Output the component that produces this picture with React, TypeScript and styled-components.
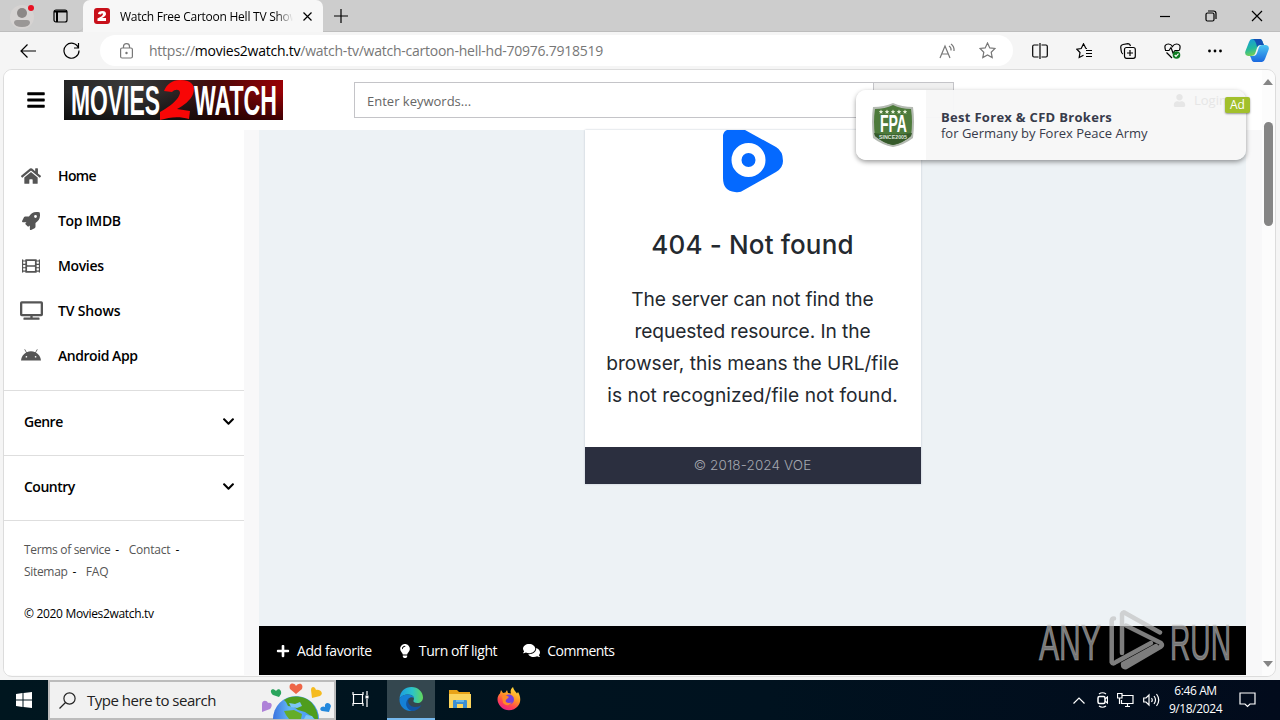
import type { ReactNode } from "react";
import styled, { createGlobalStyle } from "styled-components";
import {
  FaHome,
  FaRocket,
  FaFilm,
  FaTv,
  FaAndroid,
  FaChevronDown,
  FaPlus,
  FaLightbulb,
  FaComments,
  FaUser,
  FaBars,
} from "react-icons/fa";

const menus = [
  { name: "Home", icon: <FaHome size={20} />, gap: -0.6 },
  { name: "Top IMDB", icon: <FaRocket size={18} />, gap: -0.35 },
  { name: "Movies", icon: <FaFilm size={18} />, gap: -0.35 },
  { name: "TV Shows", icon: <FaTv size={23} />, gap: -0.15 },
  { name: "Android App", icon: <FaAndroid size={20} />, gap: -0.45 },
];

const sentences = [
  { text: "The server can not find the", gap: -0.12 },
  { text: "requested resource. In the", gap: -0.1 },
  { text: "browser, this means the URL/file", gap: -0.03 },
  { text: "is not recognized/file not found.", gap: 0.06 },
];

const BrandLogo = () => (
  <svg width="219" height="40" viewBox="0 0 219 40">
    <defs>
      <linearGradient id="brand" x1="0" x2="1" y1="0" y2="0">
        <stop offset="0" stopColor="#252525" />
        <stop offset="0.3" stopColor="#3a3a3a" />
        <stop offset="0.5" stopColor="#2b2424" />
        <stop offset="0.7" stopColor="#4a0808" />
        <stop offset="1" stopColor="#990005" />
      </linearGradient>
      <linearGradient id="brandShade" x1="0" x2="0" y1="0" y2="1">
        <stop offset="0.3" stopColor="#000" stopOpacity="0" />
        <stop offset="1" stopColor="#000" stopOpacity="0.6" />
      </linearGradient>
    </defs>
    <rect width="219" height="40" fill="url(#brand)" />
    <rect width="219" height="40" fill="url(#brandShade)" />
    <path
      d="M100 11 C103 4 108 0 116 0 C128 0 132 6 129 14 C127 20 119 26 113 29 L126 31 L125 39 C115 36 106 37 96 40 L96 32 C107 26 115 19 116 13 C116 9 111 9 108 12 Z"
      fill="#f80606"
    />
    <g transform="scale(1 1.6)" fill="#fff" fontFamily="Liberation Sans Narrow, Liberation Sans" fontWeight="700" fontSize="27">
      <text x="7" y="22" textLength="89" lengthAdjust="spacingAndGlyphs">MOVIES</text>
      <text x="130" y="22" textLength="83" lengthAdjust="spacingAndGlyphs">WATCH</text>
    </g>
  </svg>
);

const Globe = () => (
  <svg width="72" height="37" viewBox="0 0 72 37">
    <defs>
      <linearGradient id="sea" x1="0" x2="1" y1="0" y2="0">
        <stop offset="0" stopColor="#3b74e0" />
        <stop offset="0.35" stopColor="#62b4f5" />
        <stop offset="1" stopColor="#3f8ff0" />
      </linearGradient>
    </defs>
    <circle cx="36" cy="37" r="23" fill="url(#sea)" />
    <path d="M24 18 C32 12 45 14 51 20 C56 26 58 31 58 37 L55 37 L51 34 L45 30 L38 28 L34 25 L28 24 L26 20 Z" fill="#4f9d1d" />
    <path d="M24 29 L34 28 L42 32 L41 37 H29 L26 33 Z" fill="#64ad28" />
    <path d="M29 21 L35 22 L40 20 L42 24 L37 26 L31 25Z" fill="#7cc6f5" />
    <path d="M46 33 L52 34 L54 37 H44Z" fill="#7cc6f5" />
    <path d="M36 12 l-6 -5 c-2 -6 4 -7 6 -3 c3 -4 8 -2 6 3 z" fill="#ee6648" />
    <path d="M19 15 l-6 -2 c-5 -5 0 -8 3 -4 c3 -4 6 0 5 3 z" fill="#2aa45c" />
    <path d="M52 16 l-1 -8 c0 -4 4 -4 5 0 c5 -1 8 4 4 6 z" fill="#f5bb20" />
    <path d="M2 30 l0 -8 c0 -4 5 -4 6 -1 c4 -1 5 3 2 6 z" fill="#ae82d8" />
    <path d="M69 30 l-7 -1 c-4 -2 0 -6 3 -4 c-1 -5 5 -5 6 -1 z" fill="#2388dd" />
  </svg>
);

const EdgeIcon = () => (
  <svg width="24" height="24" viewBox="0 0 24 24">
    <defs>
      <linearGradient id="edgeTop" x1="0" x2="1">
        <stop offset="0" stopColor="#1b9de2" />
        <stop offset="0.55" stopColor="#2cc3c8" />
        <stop offset="1" stopColor="#62d85b" />
      </linearGradient>
    </defs>
    <path d="M0.5 12 C1 4 6 0 12.5 0 C19 0 24 5 24 10.5 C24 14 21.500 16 18.500 16 C15.500 16 14 15 14.500 13.500 C16 11 14 7.500 9.500 7.500 C5 7.500 1.500 9.500 0.500 12Z" fill="url(#edgeTop)" />
    <path d="M0.5 12 C1.500 9 5 7.500 9 7.500 C12 7.500 14.500 9 15 11 C12 9 8 11.500 8.500 15.500 C9 20 13 23 17 22.500 C8 27 0 20 0.500 12Z" fill="#1580d6" />
    <path d="M10.500 11 C7 15 11 20 16 20 C19 20 21 19 22.500 18 C20 22 17 24 13 24 C9 23 6 19 7.500 14.500 C8 13 9 11.500 10.500 11Z" fill="#1254a2" />
  </svg>
);

const FolderIcon = () => (
  <svg width="22" height="19" viewBox="0 0 22 19">
    <path d="M0 0H8L10 2H21V18H0Z" fill="#e8a317" />
    <path d="M0 4H22V18H0Z" fill="#fbd45c" />
    <path d="M4 18V11Q4 10 5 10H17Q18 10 18 11V18H14V14H8V18Z" fill="#3d8fd1" />
    <path d="M7 10H15V12H7Z" fill="#67b7e8" />
  </svg>
);

const FirefoxIcon = () => (
  <svg width="24" height="24" viewBox="0 0 24 24">
    <defs>
      <linearGradient id="fox" x1="0.8" y1="0" x2="0.3" y2="1">
        <stop offset="0" stopColor="#ffe23d" />
        <stop offset="0.45" stopColor="#ff9426" />
        <stop offset="0.75" stopColor="#ff4352" />
        <stop offset="1" stopColor="#e8218b" />
      </linearGradient>
    </defs>
    <path d="M4 3 L6 6 L8.500 5.500 L10 3 L11 6 L14 6.500 C13 4 14 1.500 16 0 C16.500 3 19 5 20 6.500 L21 5 C24 10 24 15 21 19 C17 24 9 25 4 20 C-1 15 0 9 3 6.500Z" fill="url(#fox)" />
    <circle cx="12" cy="12.500" r="5" fill="#7440dc" />
    <path d="M5 9 Q9 7 12 10 L10 12 Q8 13 9 15 Q12 17 15 15 Q11 21 6 16Z" fill="#ff8a27" />
  </svg>
);

const CopilotIcon = () => (
  <svg width="24" height="23" viewBox="0 0 24 23">
    <defs>
      <linearGradient id="copL" x1="0" x2="0.3" y1="0" y2="1">
        <stop offset="0" stopColor="#1798e0" />
        <stop offset="0.6" stopColor="#23b99d" />
        <stop offset="1" stopColor="#75cf55" />
      </linearGradient>
      <linearGradient id="copR" x1="0" x2="0" y1="0" y2="1">
        <stop offset="0" stopColor="#4bc5f2" />
        <stop offset="1" stopColor="#1a68df" />
      </linearGradient>
    </defs>
    <path d="M7 0H15Q17 0 18 4L19 6H15Q13 6 12 9L10 15Q9 17 6 17H3Q-1 16 0.500 12L4 3Q5 0 7 0Z" fill="url(#copL)" />
    <path d="M17 23H9Q7 23 6 19L5 17H8Q11 17 12 14L14 8Q15 6 17 6H21Q25 7 23.500 11L20 20Q19 23 17 23Z" fill="url(#copR)" />
    <path d="M8 0H15Q17 0 18 4L19 6H15Q13 6 12 8Q11 2 8 0Z" fill="#1450b4" />
  </svg>
);

const FpaBadge = () => (
  <svg width="46" height="46" viewBox="0 0 46 46">
    <path d="M3 5Q14 5 23 1Q32 5 43 5Q45 19 43 36Q34 43 23 45Q12 43 3 36Q1 19 3 5Z" fill="#b4bab2" />
    <path d="M5 7Q15 7 23 3Q31 7 41 7Q43 20 41 34Q33 41 23 43Q13 41 5 34Q3 20 5 7Z" fill="#4d7a3b" />
    <path d="M4 31Q22 34 42 31L41 34Q33 41 23 43Q13 41 5 34Z" fill="#365a2b" />
    {[11, 17, 23, 29, 35].map((x) => (
      <path key={x} d={`M${x} 7.500l0.700 1.500h1.500l-1.200 1.200l0.500 1.600l-1.500 -0.900l-1.500 0.900l0.500 -1.600l-1.200 -1.200h1.500z`} fill="#e8f0d8" />
    ))}
    <g transform="scale(1 1.25)">
      <text x="10" y="24" fill="#fff" fontSize="19" fontWeight="700" fontFamily="Liberation Sans" textLength="27" lengthAdjust="spacingAndGlyphs">FPA</text>
    </g>
    <text x="9" y="37" fill="#dfe6dc" fontSize="5.500" fontWeight="700" fontFamily="Liberation Sans" textLength="28" lengthAdjust="spacingAndGlyphs">SINCE2005</text>
  </svg>
);

const AnyRun = () => (
  <svg width="196" height="64" viewBox="0 0 196 64">
    <g fill="none" stroke="#c0c0c0" strokeWidth="4.500" strokeLinejoin="round" strokeLinecap="round" opacity="0.65">
      <path d="M77 9.500 Q74.700 9.500 74.700 12 V53 Q76 56 79 53 L114 34" />
      <path d="M85 44 V5 Q86 2 89 4.500 L123 23.500" />
      <path d="M89 16.500 L124 34 Q126 36 124 37.500 L89 58 Q86 59 86 55 L119 37" />
    </g>
    <g transform="scale(1 1.750)" fill="#c0c0c0" fillOpacity="0.65" fontFamily="Liberation Sans Narrow, Liberation Sans" fontSize="29">
      <text x="2" y="29" stroke="#c0c0c0" strokeOpacity="0.4" strokeWidth="0.7" textLength="62" lengthAdjust="spacingAndGlyphs">ANY</text>
      <text x="133" y="29" stroke="#c0c0c0" strokeOpacity="0.4" strokeWidth="0.7" textLength="61" lengthAdjust="spacingAndGlyphs">RUN</text>
    </g>
  </svg>
);

const Line = ({ w, h, children }: { w: number; h: number; children: ReactNode }) => (
  <svg width={w} height={h} viewBox={`0 0 ${w} ${h}`} fill="none" stroke="currentColor" strokeWidth="1.2">
    {children}
  </svg>
);

const App = () => {
  return (
    <Screen>
      <GlobalStyle />
      <TabStrip>
        <StripLeft>
          <svg width="26" height="26" viewBox="0 0 26 26">
            <circle cx="12" cy="14" r="12" fill="#d6d3d2" />
            <circle cx="12" cy="10" r="5" fill="#8b8786" />
            <path d="M4 20Q4 17 7 17H17Q20 17 20 20Q19 24 12 24Q5 24 4 20Z" fill="#9a9796" />
            <circle cx="21" cy="5" r="3" fill="#e81123" />
          </svg>
          <Line w={15} h={14}>
            <rect x="1" y="1" width="13" height="12" rx="2" />
            <path d="M1 2.500H14M4 3V13" strokeWidth="2" />
          </Line>
        </StripLeft>
        <Tab>
          <svg width="16" height="16" viewBox="0 0 16 16">
            <rect width="16" height="16" rx="3" fill="#c8101a" />
            <path d="M4 6Q4 3 8.500 3Q12 3 12 6Q12 8 8 10H12V13H3.500V10.500Q9 8 9 6Q8 4.500 7 6.500Z" fill="#fff" />
          </svg>
          <TabTitle>Watch Free Cartoon Hell TV Show</TabTitle>
          <Line w={9} h={9}>
            <path d="M0.500 0.500L8.500 8.500M8.500 0.500L0.500 8.500" />
          </Line>
        </Tab>
        <NewTab>
          <Line w={14} h={14}>
            <path d="M7 0V14M0 7H14" />
          </Line>
        </NewTab>
        <WindowButtons>
          <Line w={12} h={12}>
            <path d="M1 6.500H11" />
          </Line>
          <Line w={12} h={12}>
            <rect x="1" y="3" width="8" height="8" rx="1.500" />
            <path d="M3 1H8.500Q11 1 11 3.500V9" />
          </Line>
          <Line w={12} h={12}>
            <path d="M1 1L11 11M11 1L1 11" />
          </Line>
        </WindowButtons>
      </TabStrip>
      <AddressRow>
        <NavIcons>
          <Line w={16} h={14}>
            <path d="M16 7H1M7.500 0.500L1 7L7.500 13.500" />
          </Line>
          <Line w={17} h={17}>
            <path d="M15.500 6A7.500 7.500 0 1 0 16 8.500M15.500 1V6H11" />
          </Line>
        </NavIcons>
        <UrlBar>
          <Line w={13} h={16}>
            <rect x="0.600" y="5" width="11.800" height="10" rx="1.500" />
            <path d="M3.500 5V3.500Q3.500 0.700 6.500 0.700Q9.500 0.700 9.500 3.500V5" />
            <circle cx="6.500" cy="10" r="0.600" />
          </Line>
          <Url>
            https://<b>movies2watch.tv</b>/watch-tv/watch-cartoon-hell-hd-70976.7918519
          </Url>
          <Line w={17} h={16}>
            <path d="M1 15L6 3L11 15M3 11H9M10 3Q12.500 4.500 12 7.500M12 1Q15.500 3.500 15 8" />
          </Line>
          <Line w={17} h={17}>
            <path d="M8.500 1L10.800 5.900L16 6.500L12.200 10.200L13.200 15.600L8.500 13L3.800 15.600L4.800 10.200L1 6.500L6.200 5.900Z" />
          </Line>
        </UrlBar>
        <ToolIcons>
          <Line w={16} h={16}>
            <path d="M6.500 2H2Q0.700 2 0.700 3.500V12.500Q0.700 14 2 14H6.500M9.500 2H14Q15.300 2 15.300 3.500V12.500Q15.300 14 14 14H9.500M8 0V16" />
          </Line>
          <Line w={17} h={16}>
            <path d="M11 5.500L9.800 5.300L7.500 0.800L5.200 5.500L0.800 6.200L4 9.500L3.200 14.500L7.500 12.200M10 7.500H16M10 10.500H16M10 13.500H16" />
          </Line>
          <Line w={16} h={16}>
            <path d="M3 11Q1.500 10.500 1.200 8L0.700 4Q0.700 2 3 1.500L8 0.700Q10 0.700 10.500 3" />
            <rect x="4.500" y="4.500" width="10.800" height="10.800" rx="2" />
            <path d="M10 7V13M7 10H13" />
          </Line>
          <Line w={17} h={16}>
            <path d="M1.500 7Q-0.500 1 4.500 1Q7 1 8.500 3.500Q10 1 12.500 1Q17.500 1 15.500 7M1 7.500H5L7 4.500L9 10L11 7.500H15.500M2.500 9.500L8 15" />
            <circle cx="12.500" cy="12" r="3.800" fill="#0f7b22" stroke="none" />
            <path d="M10.700 12L12 13.300L14.500 10.700" stroke="#fff" />
          </Line>
          <Line w={14} h={4}>
            <g fill="currentColor" stroke="none">
              <circle cx="1.500" cy="2" r="1.400" />
              <circle cx="7" cy="2" r="1.400" />
              <circle cx="12.500" cy="2" r="1.400" />
            </g>
          </Line>
          <CopilotIcon />
        </ToolIcons>
      </AddressRow>

      <PageFrame>
        <Site>
          <Header>
            <FaBars size={20} />
            <BrandLogo />
            <SearchForm>
              <SearchText>Enter keywords...</SearchText>
              <SearchBtn />
            </SearchForm>
          </Header>
          <Body>
            <Sidebar>
              <MenuList>
                {menus.map((menu) => (
                  <MenuItem key={menu.name} $gap={menu.gap}>
                    <span>{menu.icon}</span>
                    {menu.name}
                  </MenuItem>
                ))}
              </MenuList>
              <Group>
                Genre
                <FaChevronDown size={13} />
              </Group>
              <Group>
                Country
                <FaChevronDown size={13} />
              </Group>
              <Links>
                <LinkRow>
                  <span>Terms of service</span>- <span>Contact</span>-
                </LinkRow>
                <LinkRow>
                  <span>Sitemap</span>- <span>FAQ</span>
                </LinkRow>
                <Copyright>© 2020 Movies2watch.tv</Copyright>
              </Links>
            </Sidebar>
            <Main>
              <Player>
                <NotFound>
                  <svg width="60" height="63" viewBox="0 0 60 63">
                    <path d="M0 5Q1 1 4 0H22L53 17Q60 21 60 31Q60 38 53 42L21 60Q17 63 12 62Q0 61 0 48Z" fill="#0469ff" />
                    <circle cx="25.500" cy="30" r="12" fill="none" stroke="#fff" strokeWidth="10" />
                  </svg>
                  <h1>404 - Not found</h1>
                  <Message>
                    {sentences.map((sentence) => (
                      <Sentence key={sentence.text} $gap={sentence.gap}>
                        {sentence.text}
                      </Sentence>
                    ))}
                  </Message>
                  <CardFooter>© 2018-2024 VOE</CardFooter>
                </NotFound>
              </Player>
              <ActionBar>
                <Action $gap={-0.4}><FaPlus size={14} /><span>Add favorite</span></Action>
                <Action $gap={-0.4}><FaLightbulb size={14} /><span>Turn off light</span></Action>
                <Action $gap={-0.5}><FaComments size={17} /><span>Comments</span></Action>
              </ActionBar>
            </Main>
          </Body>
        </Site>
        <Scrollbar>
          <svg width="10" height="6"><path d="M0 6L5 0L10 6Z" fill="#858585" /></svg>
          <Thumb />
          <svg width="10" height="6"><path d="M0 0L5 6L10 0Z" fill="#858585" /></svg>
        </Scrollbar>
        <AdCard>
          <AdLogo><FpaBadge /></AdLogo>
          <AdText>
            <strong>Best Forex &amp; CFD Brokers</strong>
            <span>for Germany by Forex Peace Army</span>
          </AdText>
          <Login><FaUser size={13} />Login</Login>
          <AdTag>Ad</AdTag>
        </AdCard>
      </PageFrame>

      <Taskbar>
        <Start>
          <svg width="16" height="16" viewBox="0 0 16 16">
            <path d="M0 2L6.500 1V7.500H0ZM7.500 0.900L16 0V7.500H7.500ZM0 8.500H6.500V15L0 14ZM7.500 8.500H16V16L7.500 15.100Z" fill="#fff" />
          </svg>
        </Start>
        <SearchBox>
          <Line w={17} h={17}>
            <circle cx="10.500" cy="6.500" r="5.600" />
            <path d="M6.500 10.500L0.500 16.500" />
          </Line>
          <span>Type here to search</span>
          <Globe />
        </SearchBox>
        <TaskButton>
          <Line w={17} h={16}>
            <path d="M1 1V3.500H11V1M1 15V12.500H11V15M1.500 4V12M10.500 4V12M15 0V4M15 8V16" />
            <path d="M13.500 6H16.500" strokeWidth="3" />
          </Line>
        </TaskButton>
        <TaskButton $active><EdgeIcon /></TaskButton>
        <TaskButton><FolderIcon /></TaskButton>
        <TaskButton><FirefoxIcon /></TaskButton>
        <Tray>
          <Line w={12} h={7}><path d="M0.500 6.500L6 1L11.500 6.500" /></Line>
          <Line w={12} h={16}>
            <rect x="2" y="4.500" width="7" height="7" rx="1.500" strokeWidth="1.5" />
            <path d="M9 7L11.500 5V11L9 9M3 2Q6.500 -0.500 10 2M3 14Q6.500 16.500 10 14" />
          </Line>
          <Line w={17} h={14}>
            <path d="M5 2.500H16V10.500H4.500V7M8 13.500H13M10.500 10.500V13.500M0.500 0.500H5V5H0.500ZM2.500 5V11" />
          </Line>
          <Line w={17} h={14}>
            <path d="M0.700 5H3L6 2V12L3 9H0.700ZM8.500 5Q10 7 8.500 9M11 3Q14 7 11 11M13.500 1Q18 7 13.500 13" />
          </Line>
          <Clock><span>6:46 AM</span><span>9/18/2024</span></Clock>
          <Line w={17} h={16}><path d="M1 1H16V12H11L8.500 14.500L6 12H1Z" /></Line>
        </Tray>
      </Taskbar>
      <Watermark><AnyRun /></Watermark>
    </Screen>
  );
};

export default App;

const GlobalStyle = createGlobalStyle`
  * { box-sizing: border-box; }
  body {
    margin: 0;
    overflow: hidden;
    font-family: "Open Sans", "Noto Sans", sans-serif;
  }
  svg { display: block; flex-shrink: 0; }
`;

const Screen = styled.div`
  position: relative;
  width: 1280px;
  height: 720px;
  display: flex;
  flex-direction: column;
  background: #f5f5f5;
  color: #000;
  white-space: nowrap;
`;

const TabStrip = styled.div`
  display: flex;
  height: 32px;
  background: #cdcdcd;
`;

const StripLeft = styled.div`
  display: flex;
  align-items: center;
  width: 83px;
  padding-left: 10px;
  gap: 17px;
  border-radius: 0 0 5px 0;
  border-bottom: 1px solid #bdbdbd;
`;

const Tab = styled.div`
  display: flex;
  align-items: center;
  width: 240px;
  padding: 0 11px;
  background: #f7f7f7;
  border-radius: 7px 7px 0 0;
`;

const TabTitle = styled.div`
  width: 173px;
  margin: 0 10px;
  overflow: hidden;
  font-size: 12px;
  letter-spacing: -0.25px;
  mask-image: linear-gradient(90deg, #000 90%, transparent);
`;

const NewTab = styled.div`
  flex: 1;
  display: flex;
  align-items: center;
  padding-left: 11px;
  border-bottom: 1px solid #bdbdbd;
`;

const WindowButtons = styled.div`
  display: flex;
  align-items: center;
  gap: 34px;
  padding-right: 17px;
  border-bottom: 1px solid #bdbdbd;
`;

const AddressRow = styled.div`
  display: flex;
  align-items: center;
  height: 37px;
`;

const NavIcons = styled.div`
  display: flex;
  align-items: center;
  gap: 27px;
  width: 100px;
  padding-left: 20px;
`;

const UrlBar = styled.div`
  display: flex;
  flex-shrink: 0;
  align-items: center;
  width: 913px;
  height: 31px;
  padding: 0 17px 0 20px;
  gap: 23px;
  border-radius: 16px;
  background: #fff;
  color: #777;
`;

const Url = styled.div`
  flex: 1;
  margin-left: -7px;
  font-size: 14px;
  letter-spacing: -0.24px;
  b {
    color: #000;
    font-weight: 400;
  }
`;

const ToolIcons = styled.div`
  flex: 1;
  display: flex;
  align-items: center;
  gap: 27.5px;
  padding: 0 10px 0 19px;
  svg:last-child {
    margin-left: -5px;
  }
`;

const PageFrame = styled.div`
  position: relative;
  display: flex;
  width: 1273px;
  height: 608px;
  margin-left: 3px;
  border: 1px solid #dcdcdc;
  border-radius: 9px;
  background: #fafafa;
  overflow: hidden;
`;

const Site = styled.div`
  width: 1258px;
  height: 606px;
`;

const Header = styled.div`
  display: flex;
  align-items: center;
  height: 60px;
  padding-left: 22px;
  background: #fff;
  svg + svg {
    margin-left: 18px;
  }
`;

const SearchForm = styled.div`
  display: flex;
  width: 600px;
  height: 36px;
  margin-left: 71px;
  border: 1px solid #c4c4c8;
`;

const SearchText = styled.div`
  flex: 1;
  padding-left: 12px;
  line-height: 36px;
  font-size: 13px;
  color: #666;
`;

const SearchBtn = styled.div`
  width: 80px;
  border-left: 1px solid #c4c4c8;
  background: #efefef;
`;

const Body = styled.div`
  display: flex;
  height: 545px;
  background: #f8f8f9;
`;

const Sidebar = styled.div`
  width: 240px;
  background: #fff;
`;

const MenuList = styled.div`
  height: 260px;
  padding-top: 23px;
`;

const MenuItem = styled.div<{ $gap: number }>`
  display: flex;
  align-items: center;
  height: 45px;
  font-size: 14px;
  font-weight: 600;
  letter-spacing: ${({ $gap }) => $gap}px;
  span {
    display: flex;
    justify-content: center;
    width: 54px;
    color: #555;
  }
`;

const Group = styled.div`
  display: flex;
  align-items: center;
  justify-content: space-between;
  height: 65px;
  padding: 0 9px 4px 20px;
  border-top: 1px solid #dedede;
  font-size: 14px;
  font-weight: 600;
  letter-spacing: -0.5px;
`;

const Links = styled.div`
  padding: 18px 20px;
  border-top: 1px solid #dedede;
  font-size: 12px;
  letter-spacing: -0.32px;
`;

const LinkRow = styled.div`
  height: 22px;
  line-height: 22px;
  span {
    color: #555;
    margin-right: 5px;
  }
  span + span {
    margin-left: 7px;
    letter-spacing: -0.2px;
  }
`;

const Copyright = styled.div`
  margin-top: 20px;
  line-height: 22px;
`;

const Main = styled.div`
  width: 987px;
  margin-left: 15px;
`;

const Player = styled.div`
  display: flex;
  justify-content: center;
  height: 496px;
  background: #edf2f5;
`;

const NotFound = styled.div`
  display: flex;
  flex-direction: column;
  align-items: center;
  width: 336px;
  height: 354px;
  background: #fff;
  box-shadow: 0 0 2px #bfc7cf;
  color: #24292f;
  font-family: Inter, sans-serif;
  h1 {
    margin: 35px 0 0;
    font-size: 26px;
    font-weight: 500;
    line-height: 34px;
    letter-spacing: 0.14px;
  }
`;

const Message = styled.div`
  margin-top: 21px;
  display: flex;
  flex-direction: column;
  align-items: center;
`;

const Sentence = styled.div<{ $gap: number }>`
  font-size: 19.2px;
  line-height: 32px;
  letter-spacing: ${({ $gap }) => $gap}px;
`;

const CardFooter = styled.div`
  width: 336px;
  height: 37px;
  margin-top: auto;
  background: #2b2f3f;
  color: #a5a8b0;
  font-size: 13.5px;
  font-weight: 300;
  line-height: 37px;
  letter-spacing: 0.12px;
  text-align: center;
`;

const ActionBar = styled.div`
  display: flex;
  align-items: center;
  gap: 26px;
  height: 49px;
  padding-left: 17px;
  background: #000;
  color: #fff;
  font-size: 14px;
`;

const Action = styled.div<{ $gap: number }>`
  display: flex;
  align-items: center;
  gap: 7px;
  letter-spacing: ${({ $gap }) => $gap}px;
`;

const Scrollbar = styled.div`
  flex: 1;
  display: flex;
  flex-direction: column;
  align-items: center;
  padding: 9px 1px 9px 0;
  background: #fcfcfc;
  svg:last-child {
    margin-top: auto;
  }
`;

const Thumb = styled.div`
  width: 9px;
  height: 104px;
  margin-top: 37px;
  border-radius: 5px;
  background: #858585;
`;

const AdCard = styled.div`
  position: absolute;
  top: 20px;
  left: 852px;
  display: flex;
  width: 390px;
  height: 70px;
  border-radius: 10px;
  background: rgba(247, 247, 247, 0.97);
  box-shadow: 0 2px 5px rgba(0, 0, 0, 0.4);
  color: #373b4b;
`;

const AdLogo = styled.div`
  display: flex;
  align-items: center;
  justify-content: center;
  width: 70px;
  padding-left: 3px;
  border-radius: 10px 0 0 10px;
  background: #fff;
`;

const AdText = styled.div`
  display: flex;
  flex-direction: column;
  padding: 19px 0 0 15px;
  font-size: 13px;
  line-height: 16px;
  strong {
    letter-spacing: 0.3px;
  }
`;

const Login = styled.div`
  position: absolute;
  top: 1px;
  left: 317px;
  display: flex;
  align-items: center;
  gap: 8px;
  font-size: 13px;
  color: #e6e6e6;
`;

const AdTag = styled.div`
  position: absolute;
  top: 7px;
  right: -4px;
  width: 25px;
  height: 16px;
  border-radius: 2px;
  background: #a2c02c;
  box-shadow: 0 1px 2px rgba(0, 0, 0, 0.4);
  color: #fff;
  font-size: 12px;
  line-height: 16px;
  text-align: center;
`;

const Taskbar = styled.div`
  display: flex;
  height: 40px;
  margin-top: 3px;
  background: linear-gradient(90deg, #00161f, #00121f 60%, #020b1c);
  color: #fff;
`;

const Start = styled.div`
  display: flex;
  align-items: center;
  justify-content: center;
  width: 48px;
`;

const SearchBox = styled.div`
  display: flex;
  align-items: center;
  width: 288px;
  padding: 0 2px 0 9px;
  border: 2px solid #bcbcbc;
  background: #f1f1f1;
  color: #222;
  span {
    flex: 1;
    margin-left: 11px;
    font-size: 15px;
    letter-spacing: -0.48px;
  }
`;

const TaskButton = styled.div<{ $active?: boolean }>`
  display: flex;
  align-items: center;
  justify-content: center;
  width: ${({ $active }) => ($active ? 48 : 49)}px;
  margin-left: ${({ $active }) => ($active ? 2 : 0)}px;
  background: ${({ $active }) => ($active ? "#34474f" : "transparent")};
  border-bottom: 2px solid ${({ $active }) => ($active ? "#76b9ed" : "transparent")};
`;

const Tray = styled.div`
  display: flex;
  align-items: center;
  gap: 9px;
  margin-left: auto;
  padding-right: 24px;
  svg:first-child {
    margin-right: 2px;
  }
`;

const Clock = styled.div`
  display: flex;
  flex-direction: column;
  align-items: center;
  width: 53px;
  margin-right: 8px;
  font-size: 12px;
  line-height: 18px;
  letter-spacing: -0.4px;
`;

const Watermark = styled.div`
  position: absolute;
  top: 609px;
  left: 1037px;
`;
